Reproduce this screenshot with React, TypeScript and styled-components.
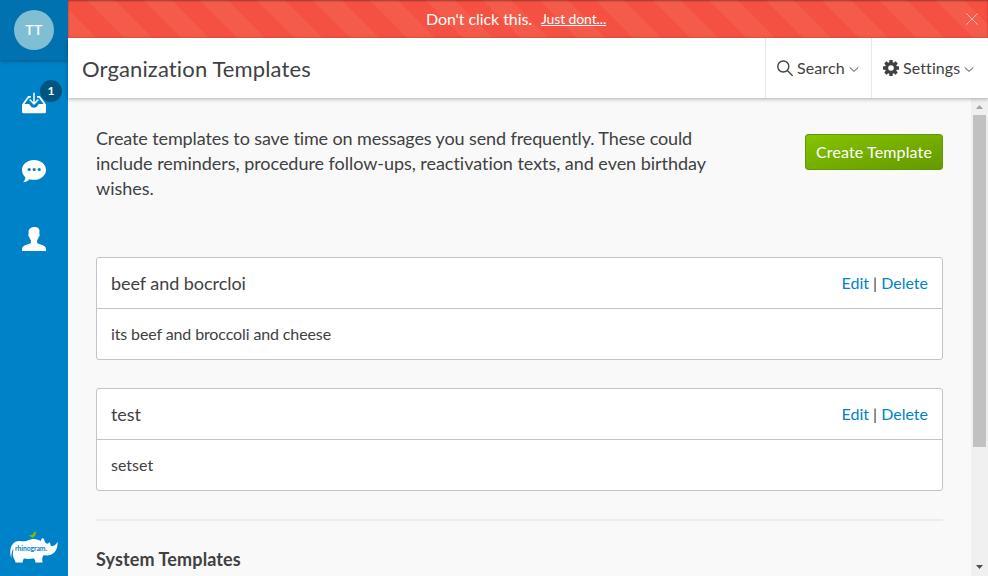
import React from "react";
import styled, { createGlobalStyle } from "styled-components";

const GlobalStyle = createGlobalStyle`
  * { box-sizing: border-box; }
  html, body { margin: 0; height: 100%; overflow: hidden; }
  body {
    font-family: Lato, sans-serif;
    font-variant-ligatures: none;
    color: #3f4142;
    background: #f9f9f9;
    font-size: 16px;
  }
  #root { height: 100%; }
`;

const Shell = styled.div`
  display: flex;
  height: 100vh;
`;

const Sidebar = styled.nav`
  width: 68px;
  flex: none;
  display: flex;
  flex-direction: column;
  align-items: center;
  background: #0082c8;
`;

const Profile = styled.div`
  width: 68px;
  height: 60px;
  display: flex;
  align-items: center;
  justify-content: center;
  background: #0072b0;
  box-shadow: 0 1px 4px rgba(0, 0, 0, 0.35);
  clip-path: inset(0 0 -6px 0);
`;

const Avatar = styled.div`
  width: 40px;
  height: 40px;
  border-radius: 50%;
  background: #80bed3;
  color: #fff;
  font-size: 14px;
  letter-spacing: 0.4px;
  line-height: 40px;
  text-align: center;
  -webkit-text-stroke: 0.2px #fff;
`;

const NavItem = styled.a`
  position: relative;
  width: 68px;
  height: 68px;
  display: flex;
  align-items: center;
  justify-content: center;
  svg { display: block; }
`;

const NavList = styled.div`
  padding-top: 9px;
  flex: 1;
`;

const Badge = styled.span`
  position: absolute;
  left: 40px;
  top: 11px;
  width: 22px;
  height: 22px;
  border-radius: 50%;
  background: #005580;
  color: #fff;
  font-size: 12px;
  font-weight: 700;
  line-height: 22px;
  text-align: center;
`;

const Logo = styled.svg`
  display: block;
  width: 50px;
  height: 34px;
  margin: 0 0 12px 0;
`;

const Main = styled.div`
  flex: 1;
  min-width: 0;
  display: flex;
  flex-direction: column;
`;

const Banner = styled.div`
  position: relative;
  height: 38px;
  flex: none;
  display: flex;
  align-items: center;
  justify-content: center;
  gap: 9px;
  padding: 0 24px 2px 0;
  color: #fff;
  background: repeating-linear-gradient(45deg, #f55b4a 0 20px, #f55142 20px 40px);
  box-shadow: inset 0 1px 2px rgba(0, 0, 0, 0.35);
`;

const BannerText = styled.span`
  letter-spacing: -0.07px;
`;

const BannerLink = styled.a`
  font-size: 14px;
  letter-spacing: -0.13px;
  text-decoration: underline;
`;

const CloseIcon = styled.svg`
  position: absolute;
  right: 10px;
  top: 13px;
`;

const Header = styled.header`
  position: relative;
  height: 60px;
  flex: none;
  display: flex;
  background: #fff;
  box-shadow: 0 1px 4px rgba(0, 0, 0, 0.3);
`;

const Title = styled.h1`
  flex: 1;
  margin: 0;
  padding: 1px 0 0 14px;
  font-size: 22px;
  font-weight: 400;
  line-height: 60px;
  letter-spacing: 0.13px;
`;

const HeaderAction = styled.div<{ $width: number }>`
  width: ${(p) => p.$width}px;
  display: flex;
  align-items: center;
  padding-left: 11px;
  border-left: 1px solid #e8e8e8;
  svg { flex: none; }
`;

const ActionLabel = styled.span`
  margin: 0 4px;
  padding-bottom: 2px;
  letter-spacing: 0.1px;
`;

const ChevronSvg = styled.svg`
  margin-top: 2px;
`;

const Body = styled.div`
  flex: 1;
  min-height: 0;
  display: flex;
`;

const Content = styled.main`
  flex: 1;
  height: 478px;
  overflow: hidden;
  padding: 28px 28px 0;
`;

const Intro = styled.section`
  display: flex;
  justify-content: space-between;
  align-items: flex-start;
  height: 131px;
`;

const IntroText = styled.p`
  margin: 0;
  width: 630px;
  font-size: 18px;
  line-height: 25px;
`;

const IntroLine = styled.span<{ $tracking: number }>`
  display: block;
  letter-spacing: ${(p) => p.$tracking}px;
`;

const CreateButton = styled.button`
  width: 138px;
  height: 36px;
  margin: 8px 0 0;
  padding: 0 0 2px;
  border: 1px solid #659900;
  border-radius: 3px;
  background: linear-gradient(to bottom right, #85c400, #659900);
  color: #fff;
  font: 400 16px Lato, sans-serif;
  letter-spacing: 0.13px;
`;

const Card = styled.article`
  height: 103px;
  margin-bottom: 28px;
  border: 1px solid #c4c4c4;
  border-radius: 3px;
  background: #fff;
`;

const CardHeader = styled.div`
  display: flex;
  justify-content: space-between;
  height: 51px;
  padding: 0 14px;
  line-height: 51px;
  border-bottom: 1px solid #c4c4c4;
`;

const CardTitle = styled.span`
  font-size: 18px;
  letter-spacing: -0.05px;
`;

const CardActions = styled.span`
  line-height: 49px;
`;

const CardText = styled.div<{ $tracking: number }>`
  padding: 0 14px;
  line-height: 49px;
  letter-spacing: ${(p) => p.$tracking}px;
`;

const Link = styled.a`
  color: #0082c8;
`;

const Divider = styled.hr`
  height: 2px;
  margin: 0;
  border: 0;
  background: #ececec;
`;

const SectionTitle = styled.h2`
  margin: 26px 0 0;
  font-size: 18px;
  font-weight: 700;
  line-height: 25px;
  letter-spacing: 0.12px;
`;

const Scrollbar = styled.div`
  width: 17px;
  flex: none;
  display: flex;
  flex-direction: column;
  align-items: center;
  background: #f0f0f0;
`;

const Thumb = styled.div`
  width: 13px;
  height: 332px;
  background: #c1c1c1;
`;

const ScrollArrow = styled.svg`
  display: block;
  width: 17px;
  height: 17px;
`;

const Spacer = styled.div`
  flex: 1;
`;

const Chevron = () => (
  <ChevronSvg width="10" height="10" viewBox="0 0 10 10" fill="none" stroke="#3f4142">
    <path d="M.7 3.300 5 7.400l4.300-4.100" />
  </ChevronSvg>
);

const InboxIcon = () => (
  <svg width="24" height="22" viewBox="0 0 24 22">
    <path
      fill="#fff"
      d="M0 12.500 6.100 4h2.800v1.700H7L2.400 12h4.200c.7 0 1.100.5 1.400 1.100.8 1.700 2.100 2.700 4 2.700s3.200-1 4-2.700c.3-.6.700-1.100 1.400-1.100h4.200L17 5.700h-1.900V4h2.800L24 12.500V20a1.200 1.200 0 0 1-1.200 1.200H1.200A1.200 1.200 0 0 1 0 20z"
    />
    <path d="M12 .8v10M7.700 7.600 12 12l4.300-4.400" fill="none" stroke="#fff" strokeWidth="1.500" />
  </svg>
);

const ChatIcon = () => (
  <svg width="24" height="24" viewBox="0 0 24 24">
    <path fill="#fff" d="M12 1C5.400 1 0 5.300 0 10.900c0 3.300 1.500 5.700 3.400 7.300-.1 2-.9 3.600-2.400 5.100 2.500-.1 4.700-1.300 6.400-3.100 1.500.4 3 .6 4.600.6 6.600 0 12-4.300 12-9.900S18.600 1 12 1z" />
    <circle cx="7.200" cy="10.500" r="1.600" fill="#0082c8" />
    <circle cx="12.200" cy="10.500" r="1.600" fill="#0082c8" />
    <circle cx="17.200" cy="10.500" r="1.600" fill="#0082c8" />
  </svg>
);

const PersonIcon = () => (
  <svg width="24" height="24" viewBox="0 0 24 24">
    <path
      fill="#fff"
      d="M7.300 2.300C8.600.6 10.500 0 12.600 0c3 0 4.900 1.400 4.900 4l-.2 2.700c.6.4.5 2.500-.5 3.100-.3 1.600-1 2.700-1.700 3.400v2c0 1.200 1.100 1.600 3.600 2.200 3.400.8 5.300 2 5.300 4.600v2H0v-2c0-2.600 1.900-3.800 5.300-4.600 2.500-.6 3.600-1 3.600-2.200v-2c-.7-.7-1.400-1.800-1.700-3.400-1-.6-1.100-2.700-.5-3.100-.3-1.800-.3-3.200.6-4.400z"
    />
  </svg>
);

const RhinoLogo = () => (
  <Logo viewBox="0 0 50 34">
    <path
      fill="#fff"
      d="M2.300 28.300C.6 23 1 17.500 3.600 14.200 5.600 11.500 8.700 10.700 12 11.200c3.700.6 6-.5 8.500-1.500 3-1.200 6.300-1 9 .3 1 .5 1.700.8 2.500.9 0-1.700.8-2.900 2-2.700 1.300.3 1.200 2.600 2 3.900.8 1.200 2.200 1.900 3.200 1.400.6-.4.700-1.300 1.400-1.100 1 .3.500 2.900 1.500 3.500 2.300.8 4.500-.6 6.400-4.100.4 5.500-1.300 9.300-4.500 11.800-2.300 1.800-5.300 2.300-7.700 1.700-1.500-.3-2.300.2-2.600 1.400-.5 1.700-.6 3.300-.1 5.700h-7.200c0-1.600-.5-3-1.800-4.100-3.200.8-6.700.7-9.600.2-1.100 1.200-1.300 2.600-1.300 3.900H6.500c-.2-2.100-2-3.700-2.500-6.300-.4-2.200.1-4.200.5-7.800-1.700 3-2.400 6.200-2.200 10z"
    />
    <text x="6" y="21" fill="#0082c8" fontFamily="Lato, sans-serif" fontSize="6.800" fontWeight="700" textLength="32">rhinogram.</text>
    <path fill="#80bc00" d="M20 5.300c2 .2 3-.4 3.900-1.100.4-1.700 1.500-2.800 2.800-2.300l1.300.2-1.200.8c0 2.300-1.200 3.600-2.500 4v1.700h-.9V7.100c-1.400 0-2.600-.7-3.400-1.800z" />
  </Logo>
);

const SearchIcon = () => (
  <svg width="16" height="17" viewBox="0 0 16 17" fill="none" stroke="#3f4142" strokeWidth="1.400">
    <circle cx="6.300" cy="6.500" r="5.500" />
    <path d="m10.300 10.500 5.300 5.300" />
  </svg>
);

const GearIcon = () => (
  <svg width="16" height="16" viewBox="0 0 16 16">
    <g fill="#3f4142">
      {[0, 45, 90, 135].map((a) => (
        <rect key={a} x="6.300" y="0" width="3.400" height="16" rx=".5" transform={`rotate(${a} 8 8)`} />
      ))}
      <circle cx="8" cy="8" r="6" />
    </g>
    <circle cx="8" cy="8" r="2.800" fill="#fff" />
  </svg>
);

type Template = { title: string; text: string; tracking: number };

const templates: Template[] = [
  { title: "beef and bocrcloi", text: "its beef and broccoli and cheese", tracking: -0.12 },
  { title: "test", text: "setset", tracking: 0 },
];

const introLines = [
  { text: "Create templates to save time on messages you send frequently. These could", tracking: -0.11 },
  { text: "include reminders, procedure follow-ups, reactivation texts, and even birthday", tracking: -0.038 },
  { text: "wishes.", tracking: 0 },
];

const TemplateCard = ({ title, text, tracking }: Template) => (
  <Card>
    <CardHeader>
      <CardTitle>{title}</CardTitle>
      <CardActions>
        <Link>Edit</Link> | <Link>Delete</Link>
      </CardActions>
    </CardHeader>
    <CardText $tracking={tracking}>{text}</CardText>
  </Card>
);

export default function App() {
  return (
    <>
      <GlobalStyle />
      <Shell>
        <Sidebar>
          <Profile>
            <Avatar>TT</Avatar>
          </Profile>
          <NavList>
            <NavItem>
              <InboxIcon />
              <Badge>1</Badge>
            </NavItem>
            <NavItem>
              <ChatIcon />
            </NavItem>
            <NavItem>
              <PersonIcon />
            </NavItem>
          </NavList>
          <RhinoLogo />
        </Sidebar>
        <Main>
          <Banner>
            <BannerText>Don't click this.</BannerText>
            <BannerLink>Just dont...</BannerLink>
            <CloseIcon width="12" height="12" viewBox="0 0 12 12" fill="none" stroke="#ffb5ae">
              <path d="m.3.3 11.400 11.400M11.700.3.3 11.700" />
            </CloseIcon>
          </Banner>
          <Header>
            <Title>Organization Templates</Title>
            <HeaderAction $width={106}>
              <SearchIcon />
              <ActionLabel>Search</ActionLabel>
              <Chevron />
            </HeaderAction>
            <HeaderAction $width={117}>
              <GearIcon />
              <ActionLabel>Settings</ActionLabel>
              <Chevron />
            </HeaderAction>
          </Header>
          <Body>
            <Content>
              <Intro>
                <IntroText>
                  {introLines.map((l) => (
                    <IntroLine key={l.text} $tracking={l.tracking}>
                      {l.text}
                    </IntroLine>
                  ))}
                </IntroText>
                <CreateButton>Create Template</CreateButton>
              </Intro>
              {templates.map((t) => (
                <TemplateCard key={t.title} {...t} />
              ))}
              <Divider />
              <SectionTitle>System Templates</SectionTitle>
            </Content>
            <Scrollbar>
              <ScrollArrow viewBox="0 0 17 17">
                <path fill="#a3a3a3" d="m5 11 3.500-4 3.500 4z" />
              </ScrollArrow>
              <Thumb />
              <Spacer />
              <ScrollArrow viewBox="0 0 17 17">
                <path fill="#505050" d="m5 6 3.500 4L12 6z" />
              </ScrollArrow>
            </Scrollbar>
          </Body>
        </Main>
      </Shell>
    </>
  );
}
